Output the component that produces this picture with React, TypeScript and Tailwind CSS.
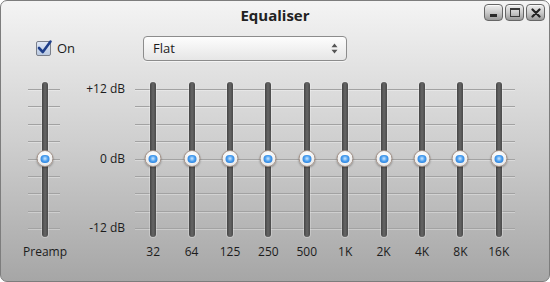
const bands = ["32", "64", "125", "250", "500", "1K", "2K", "4K", "8K", "16K"];

function GridLines({ className }: { className: string }) {
  return (
    <div className={`absolute top-[7px] bottom-[8px] flex flex-col justify-between ${className}`}>
      {Array.from({ length: 9 }).map((_, i) => (
        <div key={i} className="h-px bg-[#a2a2a2] shadow-[0_1px_0_rgba(255,255,255,0.3)]" />
      ))}
    </div>
  );
}

function Slider() {
  return (
    <div className="relative h-full w-full">
      {/* track */}
      <div className="absolute left-1/2 top-0 h-full w-[6px] -translate-x-1/2 rounded-full bg-gradient-to-r from-[#454545] via-[#666] to-[#4a4a4a] shadow-[0_0_0_1px_rgba(255,255,255,0.25)]" />
      {/* thumb */}
      <div className="absolute left-1/2 top-[68px] flex h-[17px] w-[17px] -translate-x-1/2 items-center justify-center rounded-full border border-[#a08e84] bg-[radial-gradient(circle_at_50%_35%,#ffffff_0%,#f2f2f2_55%,#d2d2d2_100%)] shadow-[0_1px_2px_rgba(0,0,0,0.3)]">
        <div className="h-[8px] w-[9px] rounded-full bg-[radial-gradient(circle_at_50%_45%,#cfe8ff_0%,#4a9ff0_45%,#1d6cc8_100%)]" />
      </div>
    </div>
  );
}

function WinButton({ children }: { children: React.ReactNode }) {
  return (
    <div className="flex h-[17px] w-[19px] items-center justify-center rounded-[4px] border border-[#666] bg-gradient-to-b from-[#eeeeee] via-[#cbcbcb] to-[#9a9a9a] shadow-[inset_0_1px_0_rgba(255,255,255,0.7)]">
      {children}
    </div>
  );
}

export default function App() {
  return (
    <div className="relative flex h-[282px] w-[550px] flex-col overflow-hidden rounded-[7px] border border-[#7d7d7d] bg-gradient-to-b from-[#f4f4f4] via-[#cfcfcf] to-[#a6a6a6] font-['Open_Sans','Noto_Sans',sans-serif] text-[#1c1c1c]">
      {/* title bar */}
      <div className="relative flex h-[28px] items-center justify-center">
        <span className="text-[15px] font-bold leading-none text-[#222]">Equaliser</span>
        <div className="absolute right-[4px] top-[3px] flex gap-[2px]">
          <WinButton>
            <div className="mt-[6px] h-[3px] w-[7px] bg-[#2a2a2a]" />
          </WinButton>
          <WinButton>
            <div className="h-[9px] w-[10px] border-[1.5px] border-t-[2px] border-[#3a3a3a]" />
          </WinButton>
          <WinButton>
            <svg width="10" height="10" viewBox="0 0 10 10">
              <path d="M1.5 1.5 L8.5 8.5 M8.5 1.5 L1.5 8.5" stroke="#222" strokeWidth="2.2" strokeLinecap="round" />
            </svg>
          </WinButton>
        </div>
      </div>

      {/* controls row */}
      <div className="mt-[7px] flex h-[25px] items-center pl-[35px]">
        <div className="flex w-[107px] items-center gap-[6px]">
          <div className="relative h-[15px] w-[15px] rounded-[2px] border border-[#7a7f8a] bg-gradient-to-b from-[#dfe8f6] to-[#b9c8e0]">
            <svg className="absolute -left-[1px] -top-[3px]" width="17" height="17" viewBox="0 0 17 17">
              <path d="M3 9 L6.8 13 L14.5 2.5" fill="none" stroke="#1f3f8a" strokeWidth="2.6" strokeLinecap="round" strokeLinejoin="round" />
            </svg>
          </div>
          <span className="text-[13px] leading-none">On</span>
        </div>
        <div className="flex h-[25px] w-[204px] items-center justify-between rounded-[4px] border border-[#8c8c8c] bg-gradient-to-b from-[#fdfdfd] to-[#e6e6e6] pl-[9px] pr-[8px] shadow-[0_1px_0_rgba(255,255,255,0.6)]">
          <span className="text-[13px] leading-none">Flat</span>
          <svg width="7" height="11" viewBox="0 0 7 11">
            <path d="M3.5 0.5 L6.5 4.2 L0.5 4.2 Z M3.5 10.5 L6.5 6.8 L0.5 6.8 Z" fill="#555" />
          </svg>
        </div>
      </div>

      {/* sliders */}
      <div className="mt-[21px] flex pl-[23px]">
        {/* preamp */}
        <div className="flex w-[42px] flex-col items-center">
          <div className="relative h-[155px] w-full">
            <GridLines className="left-[4px] right-[6px]" />
            <Slider />
          </div>
          <span className="mt-[8px] text-[12px] leading-[14px]">Preamp</span>
        </div>

        {/* dB scale */}
        <div className="flex h-[155px] w-[59px] flex-col items-end justify-between pb-[2px] text-[12px] leading-[14px]">
          <span>+12 dB</span>
          <span>0 dB</span>
          <span>-12 dB</span>
        </div>

        {/* bands */}
        <div className="ml-[9px] w-[384px]">
          <div className="relative grid h-[155px] grid-cols-10">
            <GridLines className="left-[1px] right-[3px]" />
            {bands.map((b) => (
              <Slider key={b} />
            ))}
          </div>
          <div className="mt-[8px] grid grid-cols-10 text-center text-[12px] leading-[14px]">
            {bands.map((b) => (
              <span key={b}>{b}</span>
            ))}
          </div>
        </div>
      </div>
    </div>
  );
}
